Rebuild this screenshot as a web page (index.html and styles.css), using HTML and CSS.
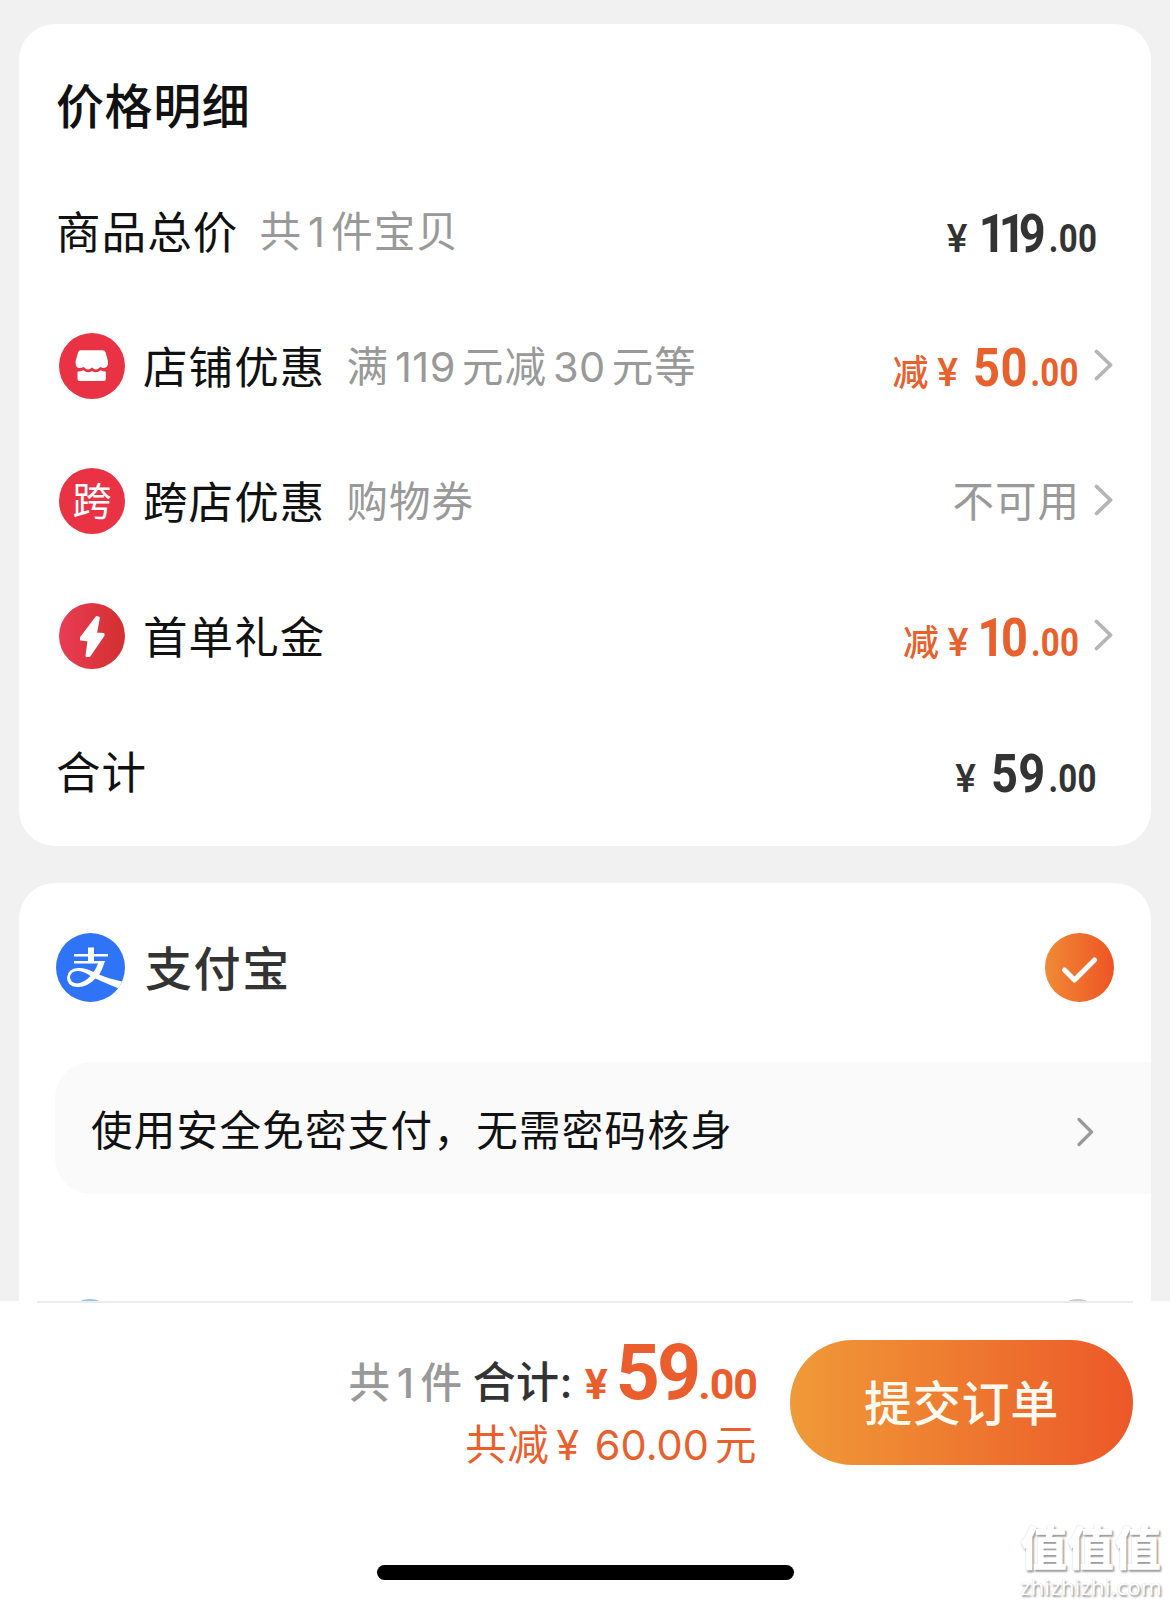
FILE: index.html
```html
<!DOCTYPE html>
<html lang="zh-CN">
<head>
<meta charset="utf-8">
<title>确认订单</title>
<link rel="stylesheet" href="styles.css">
</head>
<body>
<main class="scroll">
  <section class="card details">
    <h1 class="title">价格明细</h1>
    <div class="row">
      <span class="label">商品总价</span>
      <span class="note">共<span class="n">1</span>件宝贝</span>
      <span class="price plain"><span class="yen tight">¥</span><span class="int"><span class="k">11</span>9</span><span class="dec">.00</span></span>
    </div>
    <div class="row">
      <span class="icon"><svg viewBox="0 0 66 66"><circle cx="33" cy="33" r="33" fill="#e93345"/><path fill="#fff" d="M21.500 17.300H43.500Q45.800 17.300 46.600 19.500L48.800 27.500Q50 34.500 45 35Q43.500 35 41.300 34Q37.500 38.500 33 34.500Q28.500 38.500 24.700 34Q22.500 35 20 35Q15.500 34 16.800 27.500L19 19.500Q19.800 17.300 21.500 17.300Z"/><path fill="#fff" d="M18.500 38.500Q21.500 38.500 24.500 37.300Q28.500 41 33 38Q37.500 41 41.500 37.300Q44 38.500 46.800 38.500V46Q46.800 48 44.800 48H20.500Q18.500 48 18.500 46Z"/></svg></span>
      <span class="label">店铺优惠</span>
      <span class="note">满<span class="n">119</span>元减<span class="n">30</span>元等</span>
      <span class="price off"><span class="cut">减</span><span class="yen">¥</span><span class="int">50</span><span class="dec">.00</span></span>
      <svg class="chev" viewBox="0 0 20 32"><path d="M2.500 2.500L16.500 16L2.500 29.500"/></svg>
    </div>
    <div class="row">
      <span class="icon badge">跨</span>
      <span class="label">跨店优惠</span>
      <span class="note">购物券</span>
      <span class="note state">不可用</span>
      <svg class="chev" viewBox="0 0 20 32"><path d="M2.500 2.500L16.500 16L2.500 29.500"/></svg>
    </div>
    <div class="row">
      <span class="icon"><svg viewBox="0 0 66 66"><defs><linearGradient id="red" x1="0" x2="1"><stop offset="0" stop-color="#ea3c55"/><stop offset="1" stop-color="#d2302f"/></linearGradient></defs><circle cx="33" cy="33" r="33" fill="url(#red)"/><path fill="#fff" stroke="#fff" stroke-width="2" stroke-linejoin="round" d="M37.500 14L39.800 14.800L37 30.500L44.500 31L44.500 32.500L30.500 53L27.500 53L29.500 37.500L22 36.500L22 34.500Z"/></svg></span>
      <span class="label">首单礼金</span>
      <span class="price off"><span class="cut">减</span><span class="yen tight">¥</span><span class="int"><span class="k1">1</span>0</span><span class="dec">.00</span></span>
      <svg class="chev" viewBox="0 0 20 32"><path d="M2.500 2.500L16.500 16L2.500 29.500"/></svg>
    </div>
    <div class="row">
      <span class="label">合计</span>
      <span class="price plain"><span class="yen">¥</span><span class="int">59</span><span class="dec">.00</span></span>
    </div>
  </section>

  <section class="card pay">
    <div class="method">
      <svg class="logo" viewBox="0 0 69 69"><defs><clipPath id="disc"><circle cx="34.500" cy="34.500" r="34.500"/></clipPath></defs><g clip-path="url(#disc)"><path fill="#2f74f6" d="M0 0H69V69H0Z"/><path fill="#fff" d="M32 14.500H38V21H52V23.500H38V28H49Q47 35.500 43.300 41.500Q52 45.500 70 49.500L64 56Q49 50 39.500 45.500Q31 54.500 21 54Q11 53.500 11 44.500Q12 35 23 35Q30 35 37.500 39Q40.500 35 42 30.500H18V28H32V23.500H18V21H32ZM34.500 43Q27.500 38 21.500 38Q14.500 38.500 14 44Q14 49.500 21 50.500Q28 50 34.500 43Z"/></g></svg>
      <span class="name">支付宝</span>
      <svg class="tick" viewBox="0 0 69 69"><defs><linearGradient id="sel" x1="0" x2="1"><stop offset="0" stop-color="#f08a35"/><stop offset="1" stop-color="#ee5425"/></linearGradient></defs><circle cx="34.500" cy="34.500" r="34.500" fill="url(#sel)"/><path d="M19.500 37L29.500 47L49.500 27"/></svg>
    </div>
    <div class="quick">
      <span>使用安全免密支付，无需密码核身</span>
      <svg class="chev small" viewBox="0 0 18 30"><path d="M2 2.500L14.500 15L2 27.500"/></svg>
    </div>
    <div class="next"><i class="peek blue"></i><i class="peek ring"></i></div>
  </section>
</main>

<footer class="bar">
  <div class="line"></div>
  <div class="checkout">
    <div class="sums">
      <div class="total"><span class="count">共<span class="n">1</span>件</span><span class="sum">合计:</span><span class="big"><span class="yen">¥</span><span class="int">59</span><span class="dec">.00</span></span></div>
      <div class="saved">共减<span class="y">¥</span><span class="amt">60.00</span>元</div>
    </div>
    <button class="submit">提交订单</button>
  </div>
  <div class="home"></div>
  <div class="mark"><b>值值值</b><span>zhizhizhi.com</span></div>
</footer>
</body>
</html>
```
FILE: styles.css
```css
* { box-sizing: border-box; }

body {
  margin: 0;
  width: 1170px;
  height: 1604px;
  overflow: hidden;
  display: flex;
  flex-direction: column;
  background: #f1f1f1;
  font-family: Inter, "Noto Sans CJK SC", sans-serif;
  color: #111;
}

svg { display: block; }

.scroll {
  height: 1301px;
  overflow: hidden;
  padding: 24px 19px 0;
  display: flex;
  flex-direction: column;
  gap: 37px;
}

.card {
  flex: none;
  background: #fff;
  border-radius: 36px;
}

.details { height: 822px; }

.title {
  margin: 0;
  padding: 43px 0 0 37px;
  height: 140px;
  font-size: 48px;
  line-height: 80px;
  font-weight: 500;
  letter-spacing: .600px;
}

.row {
  height: 135px;
  padding: 0 38px 0 37px;
  display: flex;
  align-items: center;
  line-height: 60px;
  white-space: nowrap;
}

.icon { flex: none; width: 66px; height: 66px; margin: -1px 18px 0 3px; }

.badge {
  border-radius: 50%;
  background: #e93345;
  color: #fff;
  font-size: 39px;
  line-height: 65px;
  text-align: center;
}

.label { font-size: 44.500px; letter-spacing: 1.100px; padding-top: 2px; }

.note { margin-left: 21px; padding-top: 1px; font-size: 41.500px; letter-spacing: 1px; color: #999; }
.n { margin: 0 6px 0 6px; letter-spacing: .500px; }

.state { margin-left: auto; }

/* Price figures are set in a narrowed Roboto, anchored to their right edge. */
.price {
  margin-left: auto;
  padding-top: 9px;
  font-family: Roboto, "Noto Sans CJK SC", sans-serif;
  font-weight: 700;
  transform: scaleX(.87);
  transform-origin: right;
  display: flex;
  align-items: baseline;
  line-height: 60px;
}
.plain { color: #333; margin-right: 16px; }
.off { color: #e8602c; margin-right: -3px; }
.price .yen { font-size: 38px; font-weight: 500; margin-right: 19px; transform: scaleX(1.180); }
.price .tight { margin-right: 15px; }
.int { font-size: 54px; }
.price .int { letter-spacing: .500px; }
.price .dec { font-size: 38px; letter-spacing: .300px; margin-left: 3px; }
.price .k { letter-spacing: -8px; }
.price .k1 { letter-spacing: -4px; margin-left: -3px; }
.cut { font-size: 36px; font-weight: 500; transform: scaleX(1.150); transform-origin: right; margin-right: 12px; }

.chev { flex: none; width: 20px; height: 32px; margin: -3px -1px 0 18px; }
.state + .chev { margin-left: 14px; }
.chev path { fill: none; stroke: #b5b5b5; stroke-width: 3.800; stroke-linecap: round; stroke-linejoin: round; }

.pay { height: 520px; display: flex; flex-direction: column; }

.method {
  height: 169px;
  flex: none;
  padding: 0 37px;
  display: flex;
  align-items: center;
  color: #333;
}
.logo, .tick { flex: none; width: 69px; height: 69px; }
.name { margin: -4px 0 0 20px; font-size: 47px; font-weight: 500; letter-spacing: 1.600px; }
.tick { margin-left: auto; }
.tick path { fill: none; stroke: #fff; stroke-width: 5; stroke-linecap: round; stroke-linejoin: round; }

.quick {
  flex: none;
  margin: 10px 0 0 36px;
  height: 132px;
  padding: 0 56px 0 36px;
  border-radius: 36px 0 0 36px;
  background: #fafafa;
  display: flex;
  align-items: center;
  justify-content: space-between;
  font-size: 41.500px;
  letter-spacing: 1.300px;
}
.small { width: 18px; height: 30px; margin: 7px 0 0; }
.small path { stroke: #999; stroke-width: 3.200; }

.next {
  margin-top: 105px;
  padding: 0 63px 0 61px;
  display: flex;
  justify-content: space-between;
}
.peek { width: 20px; height: 3px; border-radius: 10px / 3px 3px 0 0; }
.blue { background: #9cc8df; }
.ring { background: #ccc; }

.bar { position: relative; height: 303px; background: #fff; }
.line { margin: 0 37px; height: 2px; background: #ececec; }

.checkout { display: flex; padding-right: 37px; justify-content: flex-end; }
.sums { margin: 30px 33px 0 0; display: flex; flex-direction: column; align-items: flex-end; }
.total { display: flex; align-items: baseline; height: 78px; line-height: 78px; font-weight: 500; white-space: nowrap; }
.count { font-size: 41.500px; letter-spacing: .800px; color: #999; margin-right: 10px; }
.sum { font-size: 43px; letter-spacing: .300px; color: #333; }
.big {
  display: flex;
  align-items: baseline;
  font-family: Roboto, sans-serif;
  font-weight: 700;
  color: #ec5d2e;
  margin-left: 12px;
  position: relative;
  top: 1px;
}
.big .yen { font-size: 43px; margin-right: 8px; }
.big .int { font-size: 77px; letter-spacing: -3px; }
.big .dec { font-size: 43px; letter-spacing: -1px; }

.saved { font-size: 41.500px; line-height: 50px; letter-spacing: .600px; color: #e8602c; white-space: nowrap; margin-top: 9px; }
.y { margin: 0 15px 0 7px; }
.amt { margin-right: 6px; letter-spacing: 0; }

.submit {
  margin: 37px 0 0;
  width: 343px;
  height: 125px;
  border: 0;
  border-radius: 63px;
  background: linear-gradient(90deg, #f09a38, #ee7d30 45%, #ec5829);
  color: #fffaf0;
  font: 500 48px/125px Inter, "Noto Sans CJK SC", sans-serif;
  letter-spacing: .800px;
  padding: 1px 0 0;
}

.home { position: absolute; left: 377px; top: 264px; width: 417px; height: 15px; border-radius: 8px; background: #000; }

.mark {
  position: absolute;
  left: 1020px;
  top: 223px;
  color: #fff;
  text-shadow: 1.500px 1.500px 2px #999, 0 0 1px #ccc;
  display: flex;
  flex-direction: column;
  gap: 3px;
}
.mark b { font-size: 47px; line-height: 48px; font-weight: 900; }
.mark span { font: 22.400px/24px "Noto Sans", sans-serif; }
```
